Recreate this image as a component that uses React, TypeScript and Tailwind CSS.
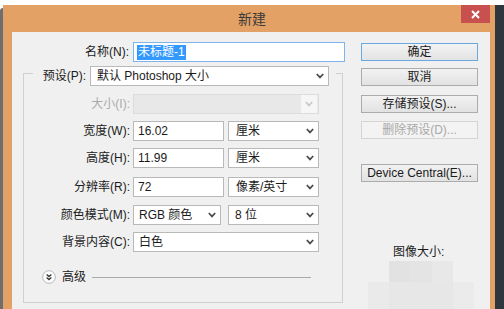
import React from "react";

const FONT = { fontFamily: '"Liberation Sans", "Noto Sans CJK SC", sans-serif' };

function Chevron({ color = "#4a4a4a" }: { color?: string }) {
  return (
    <svg width="8" height="6" viewBox="0 0 8 6" className="shrink-0">
      <path d="M0.8 1 L4 4.4 L7.2 1" stroke={color} strokeWidth="1.7" fill="none" />
    </svg>
  );
}

function Select({
  w,
  text,
  pl = "pl-[6px]",
  disabled = false,
}: {
  w: string;
  text?: string;
  pl?: string;
  disabled?: boolean;
}) {
  return (
    <div
      className={`${w} h-[20px] flex items-center justify-between border ${
        disabled ? "border-[#dcdcdc] bg-[#e8e8e8]" : "border-[#b9b9b9] bg-white"
      } ${pl} pr-[4px] text-[12px] leading-none text-[#1b1b1b]`}
    >
      <span className="whitespace-nowrap">{text}</span>
      {disabled ? (
        <div className="w-[16px] h-[18px] -mr-[3px] bg-[#f6f6f6] flex items-center justify-center">
          <Chevron color="#c8c8c8" />
        </div>
      ) : (
        <Chevron />
      )}
    </div>
  );
}

function Input({ w, text }: { w: string; text: string }) {
  return (
    <div
      className={`${w} h-[20px] flex items-center border border-[#b9b9b9] bg-white pl-[4px] text-[12px] leading-none text-[#1b1b1b]`}
    >
      {text}
    </div>
  );
}

function Row({
  label,
  mt,
  disabled = false,
  children,
}: {
  label: string;
  mt: string;
  disabled?: boolean;
  children: React.ReactNode;
}) {
  return (
    <div className={`flex items-center ${mt}`}>
      <div
        className={`w-[109px] pr-[3px] text-right text-[12px] leading-none whitespace-nowrap ${
          disabled ? "text-[#ababab]" : "text-[#1b1b1b]"
        }`}
      >
        {label}
      </div>
      {children}
    </div>
  );
}

function Button({
  text,
  mt,
  primary = false,
  disabled = false,
}: {
  text: string;
  mt: string;
  primary?: boolean;
  disabled?: boolean;
}) {
  const cls = disabled
    ? "border-[#d4d4d4] bg-[#f3f3f3] text-[#a8a8a8]"
    : primary
    ? "border-[#6aa8e2] bg-gradient-to-b from-[#f3f3f3] to-[#e3e3e3] text-[#1b1b1b]"
    : "border-[#acacac] bg-gradient-to-b from-[#f2f2f2] to-[#e2e2e2] text-[#1b1b1b]";
  return (
    <div
      className={`${mt} w-[117px] h-[18px] flex items-center justify-center border ${cls} text-[12px] leading-none whitespace-nowrap`}
    >
      {text}
    </div>
  );
}

export default function App() {
  return (
    <div className="w-[504px] h-[309px] bg-white overflow-hidden flex flex-col" style={FONT}>
      <div className="h-[5px] shrink-0" />
      <div className="flex flex-1 min-h-0">
        <div className="w-[3px] mt-[3px] bg-[#6e6e6e] rounded-tl-[3px]" />
        <div className="w-[492px] bg-[#e3a166] flex flex-col">
          {/* title bar */}
          <div className="relative h-[27px] shrink-0 flex items-center justify-center pl-[6px]">
            <span className="text-[14px] leading-none text-[#3a3a3a]">新建</span>
            <div className="absolute right-[5px] top-0 w-[29px] h-[18px] bg-[#c8504e] flex items-center justify-center">
              <svg width="9" height="9" viewBox="0 0 9 9">
                <path d="M1 1 L8 8 M8 1 L1 8" stroke="#ffffff" strokeWidth="2" />
              </svg>
            </div>
          </div>
          {/* content panel */}
          <div className="ml-[9px] mr-[5px] flex-1 bg-[#f0f0f0] flex pl-[11px] pt-[10px]">
            {/* left column */}
            <div className="w-[322px] flex flex-col">
              <div className="flex items-center h-[20px]">
                <div className="w-[110px] pr-[4px] text-right text-[12px] leading-none text-[#1b1b1b] whitespace-nowrap">
                  名称(N):
                </div>
                <div className="w-[212px] h-[20px] flex items-center border border-[#7eb4ea] bg-white pl-[3px]">
                  <span className="bg-[#3399ff] text-white text-[12px] leading-[15px] px-[1px]">
                    未标题-1
                  </span>
                </div>
              </div>
              {/* group box */}
              <div className="mt-[11px] w-[320px] h-[230px] border border-[#d0d0d0] flex flex-col">
                <div className="-mt-[8px] ml-[9px] w-[303px] h-[20px] bg-[#f0f0f0] flex items-center">
                  <div className="w-[57px] pr-[4px] text-right text-[12px] leading-none text-[#1b1b1b] whitespace-nowrap">
                    预设(P):
                  </div>
                  <Select w="w-[239px]" text="默认 Photoshop 大小" />
                </div>
                <Row label="大小(I):" mt="mt-[8px]" disabled>
                  <Select w="w-[186px]" disabled />
                </Row>
                <Row label="宽度(W):" mt="mt-[7px]">
                  <Input w="w-[91px]" text="16.02" />
                  <div className="ml-[4px]">
                    <Select w="w-[91px]" text="厘米" pl="pl-[7px]" />
                  </div>
                </Row>
                <Row label="高度(H):" mt="mt-[7px]">
                  <Input w="w-[91px]" text="11.99" />
                  <div className="ml-[4px]">
                    <Select w="w-[91px]" text="厘米" pl="pl-[7px]" />
                  </div>
                </Row>
                <Row label="分辨率(R):" mt="mt-[9px]">
                  <Input w="w-[91px]" text="72" />
                  <div className="ml-[4px]">
                    <Select w="w-[91px]" text="像素/英寸" pl="pl-[7px]" />
                  </div>
                </Row>
                <Row label="颜色模式(M):" mt="mt-[8px]">
                  <Select w="w-[88px]" text="RGB 颜色" pl="pl-[5px]" />
                  <div className="ml-[7px]">
                    <Select w="w-[91px]" text="8 位" pl="pl-[6px]" />
                  </div>
                </Row>
                <Row label="背景内容(C):" mt="mt-[7px]">
                  <Select w="w-[186px]" text="白色" pl="pl-[5px]" />
                </Row>
                <div className="mt-[18px] flex items-center h-[14px]">
                  <div className="ml-[18px]">
                    <svg width="14" height="14" viewBox="0 0 14 14">
                      <circle cx="7" cy="7" r="6.3" fill="#ffffff" stroke="#b4b4b4" strokeWidth="1" />
                      <path d="M4.6 4.4 L7 6.6 L9.4 4.4 M4.6 7.4 L7 9.6 L9.4 7.4" stroke="#3a3a3a" strokeWidth="1.3" fill="none" />
                    </svg>
                  </div>
                  <span className="ml-[6px] text-[12px] leading-none text-[#1b1b1b]">高级</span>
                  <div className="ml-[6px] w-[219px] h-px bg-[#a9a9a9]" />
                </div>
              </div>
            </div>
            {/* right column */}
            <div className="ml-[16px] w-[117px] flex flex-col pt-[1px]">
              <Button text="确定" mt="mt-0" primary />
              <Button text="取消" mt="mt-[7px]" />
              <Button text="存储预设(S)..." mt="mt-[9px]" />
              <Button text="删除预设(D)..." mt="mt-[8px]" disabled />
              <Button text="Device Central(E)..." mt="mt-[25px]" />
              <div className="mt-[63px] ml-[32px] h-[14px] flex items-center text-[12px] leading-none text-[#1b1b1b] whitespace-nowrap">
                图像大小:
              </div>
              <div className="mt-[2px] ml-[28px] flex h-[21px]">
                <div className="w-[21px] bg-[#e2e2e2]" />
                <div className="w-[22px] bg-[#e4e4e4]" />
                <div className="w-[21px] bg-[#e8e8e8]" />
              </div>
              <div className="ml-[7px] flex h-[30px]">
                <div className="w-[21px] bg-[#eaeaea]" />
                <div className="w-[64px] bg-[#e7e7e7]" />
                <div className="w-[21px] bg-[#ebebeb]" />
              </div>
            </div>
          </div>
        </div>
        <div className="flex-1 bg-[#2f363d]" />
      </div>
    </div>
  );
}
